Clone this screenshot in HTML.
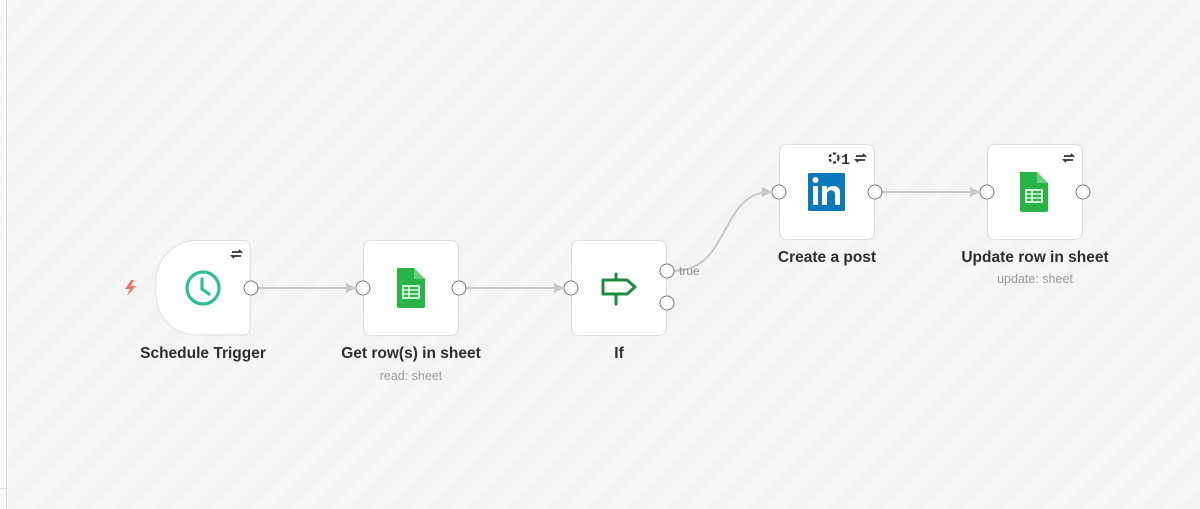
<!DOCTYPE html>
<html><head><style>
html,body{margin:0;padding:0;width:1200px;height:509px;overflow:hidden;font-family:"Liberation Sans",sans-serif;}
body{background:#f5f5f5;background-image:repeating-linear-gradient(-45deg,#f3f3f3 0,#f3f3f3 14px,#f6f6f6 14px,#f6f6f6 28px);}
.lbl{position:absolute;font-size:15.5px;color:#2e2e2e;text-align:center;width:240px;transform:translateX(-50%);font-weight:bold}
.sub{position:absolute;font-size:12.5px;color:#9a9a9a;text-align:center;width:240px;transform:translateX(-50%)}
</style></head><body>
<div style="position:absolute;left:0;top:0;width:6px;height:509px;background:#f7f7f7;border-right:1px solid #dcdcdc"></div>
<div style="position:absolute;left:0;top:488px;width:6px;height:1px;background:#dcdcdc"></div>
<svg width="1200" height="509" style="position:absolute;left:0;top:0">
<defs><marker id="a" markerWidth="10" markerHeight="10" refX="8" refY="5" orient="auto" markerUnits="userSpaceOnUse"><path d="M0,0 L10,5 L0,10z" fill="#c8c8c8"/></marker></defs>
<g stroke="#c8c8c8" stroke-width="2" fill="none">
<path d="M258 288 H354" marker-end="url(#a)"/>
<path d="M466 288 H562" marker-end="url(#a)"/>
<path d="M674 271 C730 271 720 192 770 192" marker-end="url(#a)"/>
<path d="M882 192 H978" marker-end="url(#a)"/>
</g>
<g fill="#fff" stroke="#dcdcdc" stroke-width="1">
<path d="M196 240.5 H244 a6 6 0 0 1 6 6 V329 a6 6 0 0 1 -6 6 H196 a40 40 0 0 1 -40 -40 V280.5 a40 40 0 0 1 40 -40z"/>
<rect x="363.5" y="240.5" width="95" height="95" rx="7"/>
<rect x="571.5" y="240.5" width="95" height="95" rx="7"/>
<rect x="779.5" y="144.5" width="95" height="95" rx="7"/>
<rect x="987.5" y="144.5" width="95" height="95" rx="7"/>
</g>
<g fill="#fff" stroke="#7a7a7a" stroke-width="1">
<circle cx="251" cy="288" r="7"/><circle cx="363" cy="288" r="7"/><circle cx="459" cy="288" r="7"/>
<circle cx="571" cy="288" r="7"/><circle cx="667" cy="271" r="7"/><circle cx="667" cy="303" r="7"/>
<circle cx="779" cy="192" r="7"/><circle cx="875" cy="192" r="7"/><circle cx="987" cy="192" r="7"/><circle cx="1083" cy="192" r="7"/>
</g>
<text x="679" y="275" font-size="12" fill="#888" font-family="Liberation Sans">true</text>
<path d="M131 280 L125 289 H130 L127 296 L136 286 H131 L134 280z" fill="#f5735f"/>
<circle cx="203" cy="288" r="16" fill="none" stroke="#2bbf94" stroke-width="3.2"/>
<path d="M202 279 V289 L209 294" fill="none" stroke="#2bbf94" stroke-width="3.2" stroke-linecap="round" stroke-linejoin="round"/>
<g id="sh"><path d="M397 268 H414 L425 279 V306 a2 2 0 0 1 -2 2 H399 a2 2 0 0 1 -2 -2z" fill="#28b446"/><path d="M414 268 L425 279 H414z" fill="#6ace7c"/><rect x="403" y="286" width="16" height="12" fill="none" stroke="#fff" stroke-width="1.6"/><path d="M403 290 H419 M403 294 H419 M409 286 V298" stroke="#fff" stroke-width="1.3"/></g>
<use href="#sh" x="623" y="-96"/>
<g fill="none" stroke="#1b8a3e" stroke-width="3" stroke-linejoin="round"><path d="M603 280 H627 L635 287 L627 294 H603z"/><path d="M616 274 V280 M616 294 V304" stroke-linecap="round"/></g>
<rect x="808" y="173" width="37" height="38" rx="1.5" fill="#0a79bb"/>
<rect x="813" y="186" width="5" height="19" fill="#fff"/><circle cx="815.5" cy="180" r="3" fill="#fff"/>
<path d="M822 186 H827 V189 C829 185 840 184 840 192 V205 H835 V194 C835 189 827 189 827 194 V205 H822z" fill="#fff"/>
<g fill="none" stroke="#333" stroke-width="1.7"><path d="M232 252 H241 l-2 -2 M241 256 H232 l2 2"/><path d="M856 156 H865 l-2 -2 M865 160 H856 l2 2"/><path d="M1064 156 H1073 l-2 -2 M1073 160 H1064 l2 2"/><circle cx="834" cy="158" r="4.5" stroke-dasharray="3 2" stroke-width="2.2"/></g>
<text x="841" y="164" font-size="15" font-weight="bold" fill="#333" font-family="Liberation Mono">1</text>
</svg>
<div class="lbl" style="left:203px;top:345px">Schedule Trigger</div>
<div class="lbl" style="left:411px;top:345px">Get row(s) in sheet</div>
<div class="sub" style="left:411px;top:369px">read: sheet</div>
<div class="lbl" style="left:619px;top:345px">If</div>
<div class="lbl" style="left:827px;top:249px">Create a post</div>
<div class="lbl" style="left:1035px;top:249px">Update row in sheet</div>
<div class="sub" style="left:1035px;top:272px">update: sheet</div>
</body></html>
